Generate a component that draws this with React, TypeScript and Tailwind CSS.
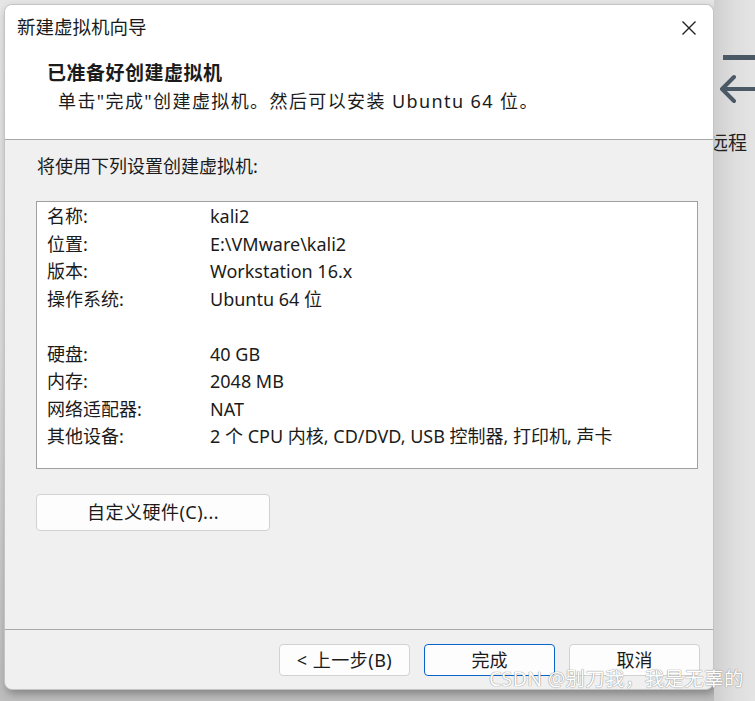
const font = "font-['Segoe_UI','Noto_Sans','Noto_Sans_CJK_SC',sans-serif]"

const rows: [string, string][] = [
  ["名称:", "kali2"],
  ["位置:", "E:\\VMware\\kali2"],
  ["版本:", "Workstation 16.x"],
  ["操作系统:", "Ubuntu 64 位"],
  ["", ""],
  ["硬盘:", "40 GB"],
  ["内存:", "2048 MB"],
  ["网络适配器:", "NAT"],
  ["其他设备:", "2 个 CPU 内核, CD/DVD, USB 控制器, 打印机, 声卡"],
]

const App = () => {
  return (
    <div className={`relative flex h-[701px] w-[755px] overflow-hidden bg-gradient-to-b from-[#e6e6e6] via-[#dcdcdc] to-[#bdbdbd] text-[#1b1b1b] ${font}`}>
      {/* Dialog */}
      <div className="z-10 ml-[4px] mt-[4px] flex h-[686px] w-[710px] shrink-0 flex-col overflow-hidden rounded-lg border border-[#c4c4c4] bg-[#f0f0f0] shadow-[2px_4px_8px_rgba(0,0,0,0.3)]">
        {/* Title bar + header */}
        <div className="flex h-[135px] flex-col border-b border-[#a8a8a8] bg-white">
          <div className="flex h-[45px] items-center justify-between pl-[12px] pr-[16px]">
            <span className="text-[18.5px] leading-none">新建虚拟机向导</span>
            <svg width="16" height="16" viewBox="0 0 16 16" className="text-[#222]">
              <path d="M1.5 1.5 L14.5 14.5 M14.5 1.5 L1.5 14.5" stroke="currentColor" strokeWidth="1.4" fill="none" />
            </svg>
          </div>
          <div className="pl-[42px] pt-[9px] text-[19px] font-bold leading-[28px] tracking-[0.5px]">已准备好创建虚拟机</div>
          <div className="pl-[53px] text-[18px] leading-[28px] tracking-[1.4px]">单击"完成"创建虚拟机。然后可以安装 Ubuntu 64 位。</div>
        </div>

        {/* Body */}
        <div className="flex flex-1 flex-col px-[31px] pt-[12px]">
          <div className="pl-[1px] text-[18px] leading-[28px]">将使用下列设置创建虚拟机:</div>
          <div className="mt-[21px] h-[268px] w-[662px] border border-[#a0a0a0] bg-white pl-[10px] pt-[1px]">
            {rows.map(([label, value], i) => (
              <div key={i} className="flex h-[27.5px] items-center text-[18px]">
                <span className="w-[163px]">{label}</span>
                <span>{value}</span>
              </div>
            ))}
          </div>
          <button className="mt-[25px] h-[37px] w-[234px] rounded-[4px] border border-[#d2d2d2] bg-[#fdfdfd] text-[18px] tracking-[0.5px]">
            自定义硬件(C)...
          </button>
        </div>

        {/* Footer */}
        <div className="flex h-[60px] items-start justify-end gap-[14px] border-t border-[#a8a8a8] pr-[13px] pt-[14px]">
          <button className="h-[32px] w-[131px] rounded-[4px] border border-[#d2d2d2] bg-[#fdfdfd] text-[18px] tracking-[0.5px]">&lt; 上一步(B)</button>
          <button className="h-[32px] w-[131px] rounded-[4px] border-[1.5px] border-[#0a64c8] bg-[#fdfdfd] text-[18px]">完成</button>
          <button className="h-[32px] w-[131px] rounded-[4px] border border-[#d2d2d2] bg-[#fdfdfd] text-[18px]">取消</button>
        </div>
      </div>

      {/* Background app peeking out on the right */}
      <div className="z-20 flex w-[41px] shrink-0 flex-col items-end overflow-hidden bg-gradient-to-r from-[#cfcfcf] via-[#dedede] to-[#e4e4e4]">
        <div className="mt-[55px] h-[5px] w-[32px] shrink-0 border-t-[5px] border-[#4b5865]" />
        <svg width="41" height="40" viewBox="0 0 41 40" className="mt-[8px] shrink-0 text-[#4b5865]">
          <path d="M41 21 H9 M20 9 L8 21 L20 33" stroke="currentColor" strokeWidth="4" fill="none" strokeLinecap="round" strokeLinejoin="round" />
        </svg>
        <div className="mr-[-1px] mt-[26px] self-start -ml-[5px] whitespace-nowrap text-[19px] leading-none text-[#222]">远程</div>
      </div>

      {/* Watermark */}
      <div className="absolute left-[489px] top-[669px] z-30 whitespace-nowrap text-[19.5px] leading-none tracking-[0.3px] text-white [text-shadow:0_0_1px_#8a8a8a,0_0_1px_#8a8a8a]">
        CSDN @别刀我，我是无辜的
      </div>
    </div>
  )
}

export default App
